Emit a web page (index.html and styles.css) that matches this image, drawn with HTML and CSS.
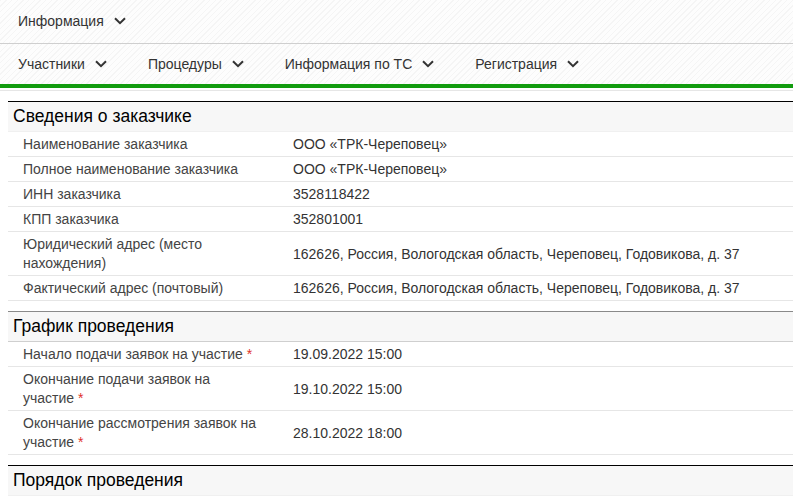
FILE: index.html
```html
<!DOCTYPE html>
<html lang="ru">
<head>
<meta charset="utf-8">
<link rel="stylesheet" href="styles.css">
</head>
<body>
<header class="header">
  <nav class="menu menu-top">
    <span class="menu-item">Информация <svg class="chev" width="12" height="8" viewBox="0 0 12 8"><polyline points="1,1.2 6,6.2 11,1.2"/></svg></span>
  </nav>
  <nav class="menu menu-sub">
    <span class="menu-item">Участники <svg class="chev" width="12" height="8" viewBox="0 0 12 8"><polyline points="1,1.2 6,6.2 11,1.2"/></svg></span>
    <span class="menu-item">Процедуры <svg class="chev" width="12" height="8" viewBox="0 0 12 8"><polyline points="1,1.2 6,6.2 11,1.2"/></svg></span>
    <span class="menu-item">Информация по ТС <svg class="chev" width="12" height="8" viewBox="0 0 12 8"><polyline points="1,1.2 6,6.2 11,1.2"/></svg></span>
    <span class="menu-item">Регистрация <svg class="chev" width="12" height="8" viewBox="0 0 12 8"><polyline points="1,1.2 6,6.2 11,1.2"/></svg></span>
  </nav>
</header>
<div class="divider"></div>
<main class="content">
  <section class="block">
    <h2 class="block-title">Сведения о заказчике</h2>
    <div class="row"><div class="label">Наименование заказчика</div><div class="value">ООО «ТРК-Череповец»</div></div>
    <div class="row"><div class="label">Полное наименование заказчика</div><div class="value">ООО «ТРК-Череповец»</div></div>
    <div class="row"><div class="label">ИНН заказчика</div><div class="value">3528118422</div></div>
    <div class="row"><div class="label">КПП заказчика</div><div class="value">352801001</div></div>
    <div class="row"><div class="label">Юридический адрес (место нахождения)</div><div class="value">162626, Россия, Вологодская область, Череповец, Годовикова, д. 37</div></div>
    <div class="row"><div class="label">Фактический адрес (почтовый)</div><div class="value">162626, Россия, Вологодская область, Череповец, Годовикова, д. 37</div></div>
  </section>
  <section class="block block-alt">
    <h2 class="block-title">График проведения</h2>
    <div class="row"><div class="label">Начало подачи заявок на участие <span class="req">*</span></div><div class="value">19.09.2022 15:00</div></div>
    <div class="row"><div class="label">Окончание подачи заявок на участие <span class="req">*</span></div><div class="value">19.10.2022 15:00</div></div>
    <div class="row"><div class="label">Окончание рассмотрения заявок на участие <span class="req">*</span></div><div class="value">28.10.2022 18:00</div></div>
  </section>
  <section class="block">
    <h2 class="block-title">Порядок проведения</h2>
  </section>
</main>
</body>
</html>
```
FILE: styles.css
```css
html, body {
  margin: 0;
  padding: 0;
  background: #fff;
  font-family: "Liberation Sans", Arial, sans-serif;
  font-size: 14px;
  color: #333;
  overflow: hidden;
}

.header {
  background: repeating-linear-gradient(-45deg, #fdfdfd 0 3px, #f5f5f5 3px 4px);
  border-bottom: 4px solid #129c0f;
}

.menu {
  display: flex;
  align-items: center;
  gap: 41px;
  padding-left: 18px;
}

.menu-top {
  height: 43px;
  border-bottom: 1px solid #cfcfcf;
}

.menu-sub {
  height: 40px;
}

.menu-item {
  display: flex;
  align-items: center;
  gap: 10px;
  color: #333;
  line-height: 19px;
}

.chev {
  display: block;
  fill: none;
  stroke: #333;
  stroke-width: 2;
  margin-top: -1px;
}

.divider {
  height: 1px;
  margin-top: 2px;
  background: #e6e6e6;
}

.content {
  margin-left: 8px;
  padding-top: 10px;
}

.block {
  margin-bottom: 10px;
}

.block-title {
  margin: 0;
  height: 29px;
  border-top: 1px solid #000;
  border-bottom: 1px solid #f0f0f0;
  background: #f7f7f7;
  padding-left: 5px;
  font-size: 17.5px;
  font-weight: normal;
  color: #000;
  line-height: 29px;
}

.block-alt .block-title {
  border-top-color: #8a8a8a;
  border-bottom-color: #cfcfcf;
}

.row {
  display: flex;
  align-items: center;
  border-bottom: 1px solid #e6e6e6;
  line-height: 19px;
  padding: 3px 0 2px;
}

.label {
  width: 238px;
  flex: none;
  padding: 0 27px 0 15px;
  color: #444;
}

.value {
  padding-left: 5px;
  color: #333;
}

.req {
  color: #e0302a;
}
```
